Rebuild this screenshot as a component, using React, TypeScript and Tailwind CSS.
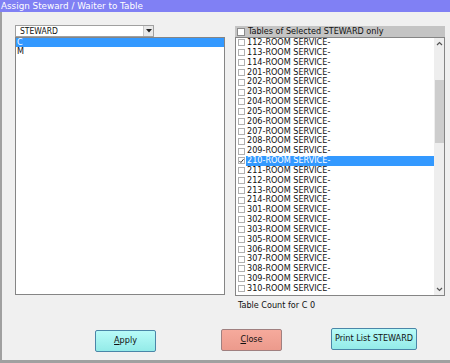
import React from 'react';

const FONT = { fontFamily: '"DejaVu Sans Condensed", "DejaVu Sans", Verdana, sans-serif' };
const TITLE_FONT = { fontFamily: '"DejaVu Sans", Verdana, sans-serif' };

const tables = [
  '112', '113', '114', '201', '202', '203', '204', '205', '206', '207', '208', '209', '210',
  '211', '212', '213', '214', '301', '302', '303', '305', '306', '307', '308', '309', '310',
];

const Check: React.FC<{ checked?: boolean }> = ({ checked }) => (
  <span className="w-[7px] h-[7px] border border-[#b0b0b0] bg-white flex items-center justify-center shrink-0">
    {checked && (
      <svg width="6" height="6" viewBox="0 0 6 6">
        <path d="M0.5 3 L2.3 4.8 L5.5 0.8" stroke="#222" strokeWidth="1.1" fill="none" />
      </svg>
    )}
  </span>
);

const TableRow: React.FC<{ no: string; selected?: boolean }> = ({ no, selected }) => (
  <div className="h-[9.84px] flex items-center pl-[2px]">
    <Check checked={selected} />
    <span
      className={`ml-[1px] pl-[1px] h-full flex items-center flex-1 ${selected ? 'bg-[#3399ff] text-white' : 'text-[#111]'}`}
    >
      {no}-ROOM SERVICE-
    </span>
  </div>
);

const Btn: React.FC<{ label: React.ReactNode; tone: 'cyan' | 'red'; className: string }> = ({ label, tone, className }) => (
  <button
    className={`h-[22px] rounded-[2px] border text-[9px] text-[#111] whitespace-nowrap flex items-center justify-center ${
      tone === 'cyan'
        ? 'border-[#4a86a8] bg-gradient-to-b from-[#b8fbf8] to-[#93ebe8]'
        : 'border-[#a08080] bg-gradient-to-b from-[#f6aa9c] to-[#ec9a8c]'
    } ${className}`}
  >
    {label}
  </button>
);

export default function App() {
  return (
    <div className="w-[450px] h-[363px] bg-[#f0f0f0] flex flex-col overflow-hidden" style={FONT}>
      <div className="h-[12px] bg-[#8080f4] text-white text-[8.8px] leading-[12px] pl-[1px] shrink-0" style={TITLE_FONT}>
        Assign Steward / Waiter to Table
      </div>
      <div className="flex-1 border-l-[2px] border-b-[3px] border-[#a0a0a0] flex flex-col">
        <div className="flex pl-[13px] pt-[13px]">
          {/* Steward side */}
          <div className="w-[210px] flex flex-col">
            <div className="w-[139px] h-[12px] border border-[#a0a0a0] bg-white flex items-center text-[8.5px] text-[#111]">
              <span className="flex-1 pl-[4px]">STEWARD</span>
              <span className="w-[10px] h-[10px] bg-[#e8e8e8] border-l border-[#c8c8c8] flex items-center justify-center">
                <svg width="6" height="4" viewBox="0 0 6 4">
                  <path d="M0 0 H6 L3 3.5 Z" fill="#222" />
                </svg>
              </span>
            </div>
            <div className="h-[258px] border border-[#858585] bg-white text-[9px]">
              <div className="h-[9px] bg-[#3399ff] text-white pl-[1px] flex items-center">C</div>
              <div className="h-[10px] text-[#111] pl-[1px] flex items-center">M</div>
            </div>
          </div>

          {/* Tables side */}
          <div className="w-[210px] ml-[10px] flex flex-col text-[9px]">
            <div className="h-[11px] mt-[1px] bg-[#c4c4c4] flex items-center pl-[2px] text-[#111]">
              <span className="w-[8px] h-[8px] border border-[#8a8a8a] bg-white shrink-0" />
              <span className="ml-[3px]">Tables of Selected STEWARD only</span>
            </div>
            <div className="h-[259px] border border-[#858585] bg-white flex">
              <div className="flex-1">
                {tables.map((t) => (
                  <TableRow key={t} no={t} selected={t === '210'} />
                ))}
              </div>
              <div className="w-[10px] bg-[#eeeeee] flex flex-col items-center">
                <svg width="7" height="10" viewBox="0 0 7 10" className="mt-[1px]">
                  <path d="M1 6 L3.5 3.5 L6 6" stroke="#555" strokeWidth="1.2" fill="none" />
                </svg>
                <div className="w-[9px] h-[63px] bg-[#cdcdcd] mt-[31px]" />
                <div className="flex-1" />
                <svg width="7" height="10" viewBox="0 0 7 10" className="mb-[1px]">
                  <path d="M1 4 L3.5 6.5 L6 4" stroke="#555" strokeWidth="1.2" fill="none" />
                </svg>
              </div>
            </div>
            <div className="mt-[3px] pl-[3px] text-[#111]">Table Count for C 0</div>
          </div>
        </div>

        <div className="flex items-start mt-auto mb-[8px]">
          <Btn
            tone="cyan"
            className="w-[61px] ml-[93px] mt-[2px]"
            label={<><span className="underline">A</span>pply</>}
          />
          <Btn
            tone="red"
            className="w-[61px] ml-[65px] mt-[1px]"
            label={<><span className="underline">C</span>lose</>}
          />
          <Btn tone="cyan" className="w-[86px] ml-[49px]" label="Print List STEWARD" />
        </div>
      </div>
    </div>
  );
}
